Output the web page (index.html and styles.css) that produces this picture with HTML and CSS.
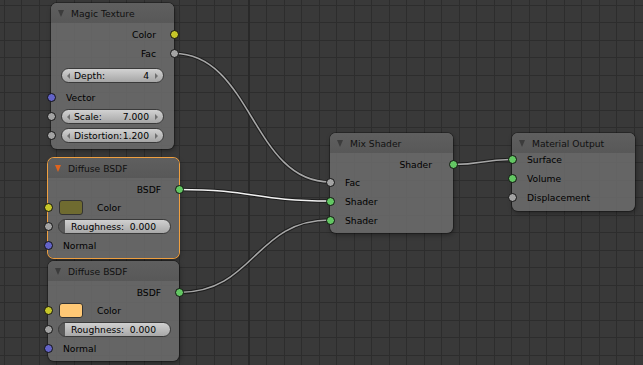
FILE: index.html
```html
<!DOCTYPE html>
<html>
<head>
<meta charset="utf-8">
<link rel="stylesheet" href="styles.css">
</head>
<body>
<div class="canvas">
  <svg class="links" width="643" height="365" viewBox="0 0 643 365">
    <g class="outline">
      <path d="M174 53.5 C252 53.5 252 182 330 182"/>
      <path d="M179 189.5 C254.5 189.5 254.5 201 330 201"/>
      <path d="M179 292.5 C254.5 292.5 254.5 220 330 220"/>
      <path d="M453 164.5 C482.5 164.5 482.5 159.5 512 159.5"/>
    </g>
    <g class="wire">
      <path d="M174 53.5 C252 53.5 252 182 330 182"/>
      <path class="hi" d="M179 189.5 C254.5 189.5 254.5 201 330 201"/>
      <path d="M179 292.5 C254.5 292.5 254.5 220 330 220"/>
      <path d="M453 164.5 C482.5 164.5 482.5 159.5 512 159.5"/>
    </g>
  </svg>

  <div class="node magic">
    <div class="hdr"><span class="tri"></span>Magic Texture</div>
    <div class="row out first"><span>Color</span><i class="sock yellow"></i></div>
    <div class="row out"><span>Fac</span><i class="sock gray"></i></div>
    <div class="row field gap3"><div class="num"><span>Depth:</span><span>4</span></div></div>
    <div class="row in gap3"><i class="sock blue"></i><span>Vector</span></div>
    <div class="row field"><i class="sock gray"></i><div class="num"><span>Scale:</span><span>7.000</span></div></div>
    <div class="row field"><i class="sock gray"></i><div class="num"><span>Distortion:</span><span>1.200</span></div></div>
  </div>

  <div class="node diff1 sel">
    <div class="hdr"><span class="tri orange"></span>Diffuse BSDF</div>
    <div class="row out first"><span>BSDF</span><i class="sock green"></i></div>
    <div class="row colrow back"><i class="sock yellow"></i><span class="swatch olive"></span><span>Color</span></div>
    <div class="row field wide"><i class="sock gray"></i><div class="slider"><span>Roughness:</span><span>0.000</span></div></div>
    <div class="row in half"><i class="sock blue"></i><span>Normal</span></div>
  </div>

  <div class="node diff2">
    <div class="hdr"><span class="tri"></span>Diffuse BSDF</div>
    <div class="row out first"><span>BSDF</span><i class="sock green"></i></div>
    <div class="row colrow back"><i class="sock yellow"></i><span class="swatch peach"></span><span>Color</span></div>
    <div class="row field wide"><i class="sock gray"></i><div class="slider"><span>Roughness:</span><span>0.000</span></div></div>
    <div class="row in half"><i class="sock blue"></i><span>Normal</span></div>
  </div>

  <div class="node mix">
    <div class="hdr"><span class="tri"></span>Mix Shader</div>
    <div class="row out first wideout"><span>Shader</span><i class="sock green"></i></div>
    <div class="row in back"><i class="sock gray"></i><span>Fac</span></div>
    <div class="row in"><i class="sock green"></i><span>Shader</span></div>
    <div class="row in half"><i class="sock green"></i><span>Shader</span></div>
  </div>

  <div class="node mat">
    <div class="hdr"><span class="tri"></span>Material Output</div>
    <div class="row in up"><i class="sock green"></i><span>Surface</span></div>
    <div class="row in"><i class="sock green"></i><span>Volume</span></div>
    <div class="row in"><i class="sock gray"></i><span>Displacement</span></div>
  </div>
</div>
</body>
</html>
```

FILE: styles.css
```css
html, body {
  margin: 0;
  padding: 0;
}
body {
  width: 643px;
  height: 365px;
  overflow: hidden;
  background-color: #393939;
  background-image:
    linear-gradient(to right, transparent 248.5px, #292929 248.5px, #292929 250px, transparent 250px),
    repeating-linear-gradient(to right, #2d2d2d 0, #2d2d2d 1px, transparent 1px, transparent 17.49px),
    repeating-linear-gradient(to bottom, #2d2d2d 0, #2d2d2d 1px, transparent 1px, transparent 17.49px);
  background-position: 0 0, 4px 0, 0 5px;
  font-family: "DejaVu Sans", "Liberation Sans", sans-serif;
  font-size: 9.2px;
  color: #000;
}
.canvas {
  position: relative;
  width: 643px;
  height: 365px;
}
.links {
  position: absolute;
  left: 0;
  top: 0;
}
.links path {
  fill: none;
  stroke-linecap: round;
}
.outline path {
  stroke: #1d1d1d;
  stroke-width: 3.6;
}
.wire path {
  stroke: #a6a6a6;
  stroke-width: 1.6;
}
.wire path.hi {
  stroke: #f2f2f2;
}

.node {
  position: absolute;
  border-radius: 6px;
  background: rgba(112, 112, 112, 0.8);
  box-shadow: 0 0 0 1px rgba(0, 0, 0, 0.28), 1px 2px 5px rgba(0, 0, 0, 0.35);
  padding-bottom: 3.5px;
}
.node.sel {
  box-shadow: 0 0 0 1px #f0a040, 1px 2px 5px rgba(0, 0, 0, 0.35);
}
.magic { left: 51px; top: 3px; width: 123px; }
.diff1 { left: 48px; top: 158px; width: 131px; }
.diff2 { left: 48px; top: 261px; width: 131px; }
.mix { left: 330px; top: 133px; width: 123px; }
.mat { left: 512px; top: 133px; width: 123px; }

.hdr {
  position: relative;
  height: 20px;
  display: flex;
  align-items: center;
  padding-left: 20px;
  border-radius: 6px 6px 0 0;
  background: linear-gradient(#5f5f5f, #585858);
  color: #111;
}
.tri {
  position: absolute;
  left: 7px;
  top: 7px;
  width: 0;
  height: 0;
  border-left: 3.5px solid transparent;
  border-right: 3.5px solid transparent;
  border-top: 7px solid #3c3c3c;
}
.tri.orange {
  border-top-color: #e0641e;
}

.row {
  position: relative;
  height: 19px;
  display: flex;
  align-items: center;
}
.row.first { margin-top: 2px; }
.row.back { margin-top: -1.5px; }
.row.half { margin-top: 0; }
.row.gap3 { margin-top: 3px; }
.row.up { margin-top: -3px; }
.row.out {
  justify-content: flex-end;
  padding-right: 18px;
}
.row.out.wideout {
  padding-right: 21px;
}
.row.in {
  padding-left: 15px;
}
.row.field {
  padding: 0 10px;
}
.row.field.wide {
  padding: 0 8px 0 10px;
}

.sock {
  position: absolute;
  top: 5px;
  width: 9px;
  height: 9px;
  box-sizing: border-box;
  border-radius: 50%;
  border: 1px solid #111;
}
.row .sock { left: -4.5px; }
.row.out .sock { left: auto; right: -4.5px; }
.yellow { background: #c7c729; }
.gray { background: #a3a3a3; }
.blue { background: #6363c7; }
.green { background: #63c763; }

.num, .slider {
  flex: 1;
  height: 15px;
  box-sizing: border-box;
  border-radius: 7.5px;
  border: 1px solid #3a3a3a;
  background: linear-gradient(#d2d2d2, #a6a6a6);
  display: flex;
  align-items: center;
  justify-content: space-between;
  position: relative;
}
.num {
  padding: 0 14px 0 12px;
}
.num::before, .num::after {
  content: "";
  position: absolute;
  top: 3.5px;
  width: 0;
  height: 0;
  border-top: 3px solid transparent;
  border-bottom: 3px solid transparent;
}
.num::before {
  left: 5px;
  border-right: 3px solid #707070;
}
.num::after {
  right: 5px;
  border-left: 3px solid #707070;
}
.slider {
  padding: 0 14px 0 12px;
  background: linear-gradient(to right, #5a5a5a 0, #5a5a5a 6px, transparent 6px), linear-gradient(#d0d0d0, #a8a8a8);
}

.colrow {
  padding-left: 11px;
}
.swatch {
  width: 24px;
  height: 15px;
  box-sizing: border-box;
  border-radius: 3px;
  border: 1px solid #333;
  margin-right: 14px;
}
.olive { background: #6f6b30; }
.peach { background: #ffc875; }
```
